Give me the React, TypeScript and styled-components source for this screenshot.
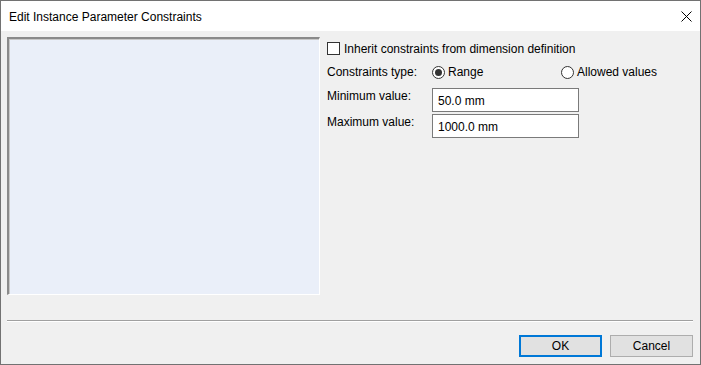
import React from 'react';
import styled, { createGlobalStyle } from 'styled-components';

const GlobalStyle = createGlobalStyle`
  html, body {
    margin: 0;
    padding: 0;
    background: #f0f0f0;
  }
  body {
    font-family: "Segoe UI", "Liberation Sans", Arial, sans-serif;
    font-size: 12px;
    color: #000;
  }
`;

const Window = styled.div`
  width: 701px;
  height: 365px;
  box-sizing: border-box;
  border: 1px solid #727272;
  display: flex;
  flex-direction: column;
  background: #f0f0f0;
  overflow: hidden;
`;

const TitleBar = styled.div`
  height: 30px;
  flex: none;
  background: #fff;
  display: flex;
  align-items: center;
  justify-content: space-between;
  padding: 0 0 0 8px;
`;

const Title = styled.span`
  font-size: 12px;
  color: #000;
  padding-top: 1px;
`;

const CloseButton = styled.div`
  width: 28px;
  height: 30px;
  display: flex;
  align-items: center;
  justify-content: center;
`;

const Body = styled.div`
  flex: 1;
  display: flex;
  flex-direction: column;
  padding: 6px 6px 0 6px;
`;

const Content = styled.div`
  display: flex;
  gap: 7px;
  height: 258px;
`;

const Preview = styled.div`
  width: 313px;
  height: 258px;
  box-sizing: border-box;
  background: #eaeff9;
  border-style: solid;
  border-width: 2px 1px 1px 2px;
  border-color: #8a8a8a #ffffff #ffffff #8a8a8a;
  box-shadow: inset 1px 1px 0 #c8c8c8;
`;

const Form = styled.div`
  flex: 1;
  display: flex;
  flex-direction: column;
  padding-top: 5px;
`;

const CheckRow = styled.label`
  display: flex;
  align-items: center;
  gap: 4px;
  height: 13px;
  margin-bottom: 10px;
`;

const CheckBox = styled.span`
  width: 13px;
  height: 13px;
  box-sizing: border-box;
  border: 1px solid #333;
  background: #fff;
`;

const FieldRow = styled.div<{ $h: number }>`
  display: grid;
  grid-template-columns: 105px 1fr;
  align-items: start;
  height: ${(p) => p.$h}px;
`;

const Label = styled.span<{ $top?: number }>`
  padding-top: ${(p) => p.$top ?? 0}px;
  white-space: nowrap;
`;

const RadioGroup = styled.div`
  display: grid;
  grid-template-columns: 129px auto;
  width: 231px;
`;

const Radio = styled.span`
  display: inline-flex;
  align-items: center;
  gap: 3px;
`;

const RadioDot = styled.span<{ $checked?: boolean }>`
  width: 13px;
  height: 13px;
  box-sizing: border-box;
  border: 1px solid #333;
  border-radius: 50%;
  background: #fff;
  display: flex;
  align-items: center;
  justify-content: center;

  &::after {
    content: '';
    display: ${(p) => (p.$checked ? 'block' : 'none')};
    width: 7px;
    height: 7px;
    border-radius: 50%;
    background: #333;
  }
`;

const TextBox = styled.div`
  width: 147px;
  height: 24px;
  box-sizing: border-box;
  border: 1px solid #7a7a7a;
  background: #fff;
  display: flex;
  align-items: center;
  padding-left: 5px;
  padding-top: 1px;
`;

const Separator = styled.div`
  margin-top: 25px;
  height: 1px;
  background: #a0a0a0;
  border-bottom: 1px solid #fff;
  margin-right: 1px;
`;

const Footer = styled.div`
  display: flex;
  justify-content: flex-end;
  gap: 8px;
  margin-top: 13px;
  margin-right: 1px;
`;

const Button = styled.button<{ $default?: boolean }>`
  width: 83px;
  height: 22px;
  box-sizing: border-box;
  font: inherit;
  color: #000;
  background: #e1e1e1;
  border: ${(p) => (p.$default ? '2px solid #0078d7' : '1px solid #adadad')};
  padding: 0;
`;

const App = (): JSX.Element => (
  <>
    <GlobalStyle />
    <Window>
      <TitleBar>
        <Title>Edit Instance Parameter Constraints</Title>
        <CloseButton>
          <svg width="11" height="11" viewBox="0 0 11 11">
            <path d="M0.5 0.5 L10.5 10.5 M10.5 0.5 L0.5 10.5" stroke="#000" strokeWidth="1" fill="none" />
          </svg>
        </CloseButton>
      </TitleBar>
      <Body>
        <Content>
          <Preview />
          <Form>
            <CheckRow>
              <CheckBox />
              <span>Inherit constraints from dimension definition</span>
            </CheckRow>
            <FieldRow $h={23}>
              <Label>Constraints type:</Label>
              <RadioGroup>
                <Radio>
                  <RadioDot $checked />
                  Range
                </Radio>
                <Radio>
                  <RadioDot />
                  Allowed values
                </Radio>
              </RadioGroup>
            </FieldRow>
            <FieldRow $h={26}>
              <Label $top={1}>Minimum value:</Label>
              <TextBox>50.0 mm</TextBox>
            </FieldRow>
            <FieldRow $h={26}>
              <Label $top={1}>Maximum value:</Label>
              <TextBox>1000.0 mm</TextBox>
            </FieldRow>
          </Form>
        </Content>
        <Separator />
        <Footer>
          <Button $default>OK</Button>
          <Button>Cancel</Button>
        </Footer>
      </Body>
    </Window>
  </>
);

export default App;
